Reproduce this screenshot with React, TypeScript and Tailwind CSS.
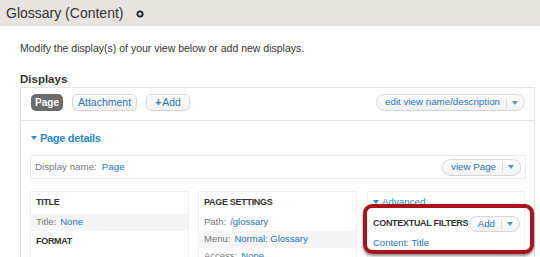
import React from "react";

const font = { fontFamily: '"Liberation Sans", Arial, sans-serif' };

function Caret({ color = "#5a8fc4" }: { color?: string }) {
  return (
    <svg width="6" height="4" viewBox="0 0 6 4" aria-hidden>
      <path d="M0 0h6L3 4z" fill={color} />
    </svg>
  );
}

function PillDrop({ label, className = "" }: { label: string; className?: string }) {
  return (
    <div
      className={`flex items-center rounded-full border border-[#d6d6d6] bg-gradient-to-b from-white to-[#f2f2f2] text-[9.75px] text-[#2673b8] ${className}`}
    >
      <span className="pl-[8px] pr-[6px]">{label}</span>
      <span className="flex h-[10px] items-center border-l border-[#dadada] pl-[5px] pr-[6px]">
        <Caret />
      </span>
    </div>
  );
}

function Tab({ label, active }: { label: React.ReactNode; active?: boolean }) {
  return active ? (
    <div className="flex h-[17px] w-[32px] items-center justify-center rounded-[5px] bg-[#6c6c6c] text-[10px] font-bold text-white">
      {label}
    </div>
  ) : (
    <div className="flex h-[17px] items-center rounded-[5px] border border-[#d8d8d8] bg-gradient-to-b from-white to-[#f0f0f0] px-[5px] text-[10.5px] text-[#2673b8]">
      {label}
    </div>
  );
}

function Row({ k, v, shade }: { k: string; v: string; shade?: boolean }) {
  return (
    <div className={`flex h-[17px] items-center px-[5px] text-[9.5px] ${shade ? "bg-[#f5f5f5]" : ""}`}>
      <span className="text-[#777]">{k}:</span>
      <span className="ml-[4px] text-[#2673b8]">{v}</span>
    </div>
  );
}

function Heading({ children }: { children: React.ReactNode }) {
  return (
    <div className="flex h-[22px] items-center whitespace-nowrap px-[5px] text-[9px] font-bold tracking-[-0.3px] text-[#333]">
      {children}
    </div>
  );
}

export default function App() {
  return (
    <div className="relative h-[257px] w-[540px] overflow-hidden bg-white" style={font}>
      <header className="flex h-[26px] items-center bg-[#e6e4df] pl-[6px]">
        <h1 className="text-[14px] text-[#333]">Glossary (Content)</h1>
        <svg className="ml-[13px] mt-[2px]" width="8" height="8" viewBox="0 0 8 8" aria-hidden>
          <circle cx="4" cy="4" r="2.6" fill="none" stroke="#222" strokeWidth="1.9" />
        </svg>
      </header>

      <main className="pl-[20px] pr-[5px]">
        <p className="mt-[15px] text-[10.5px] leading-[14px] text-[#333]">
          Modify the display(s) of your view below or add new displays.
        </p>
        <h2 className="mt-[16px] text-[11.5px] font-bold leading-[16px] text-[#333]">Displays</h2>

        <div className="border border-[#e2e2e2]">
          <div className="flex h-[33px] items-start border-b border-[#e2e2e2] pl-[10px] pr-[9px] pt-[6px]">
            <div className="flex gap-[9px]">
              <Tab label="Page" active />
              <Tab label="Attachment" />
              <Tab
                label={
                  <span className="px-[3px]">
                    <span className="mr-[1px] font-bold">+</span>Add
                  </span>
                }
              />
            </div>
            <PillDrop label="edit view name/description" className="ml-auto h-[17px]" />
          </div>

          <div className="pl-[9px] pr-[8px] pb-[10px]">
            <div className="flex h-[34px] items-center gap-[3px] pl-[1px] text-[11px] font-bold tracking-[-0.3px] text-[#2a88cf]">
              <Caret color="#2a88cf" />
              Page details
            </div>

            <div className="flex h-[24px] items-center border border-[#ececec] pl-[4px] pr-[4px] text-[9.75px]">
              <span className="text-[#777]">Display name:</span>
              <span className="ml-[5px] text-[#2673b8]">Page</span>
              <PillDrop label="view Page" className="ml-auto h-[17px]" />
            </div>

            <div className="mt-[12px] grid grid-cols-[159px_159px_159px] gap-x-[9px]">
              <div className="h-[80px] border border-[#efefef]">
                <Heading>TITLE</Heading>
                <Row k="Title" v="None" shade />
                <Heading>FORMAT</Heading>
              </div>
              <div className="h-[80px] border border-[#efefef]">
                <Heading>PAGE SETTINGS</Heading>
                <Row k="Path" v="/glossary" />
                <Row k="Menu" v="Normal: Glossary" shade />
                <Row k="Access" v="None" />
              </div>
              <div className="ml-[1px] h-[80px] border border-[#efefef]">
                <div className="flex h-[23px] items-start gap-[3px] px-[5px] pt-[4px] text-[9.75px] leading-[12px] text-[#2a88cf]">
                  <span className="mt-[4px]">
                    <Caret color="#2a88cf" />
                  </span>
                  Advanced
                </div>
                <div className="flex h-[18px] items-center pl-[5px] pr-[4px]">
                  <span className="whitespace-nowrap text-[9px] font-bold tracking-[-0.3px] text-[#333]">
                    CONTEXTUAL FILTERS
                  </span>
                  <PillDrop label="Add" className="ml-auto h-[16px]" />
                </div>
                <div className="mt-[3px] px-[5px] text-[9.5px] text-[#2673b8]">Content: Title</div>
              </div>
            </div>
          </div>
        </div>
      </main>

      <div className="pointer-events-none absolute left-[363px] top-[204px] h-[50px] w-[171px] rounded-[9px] border-[4px] border-[#a8141b] shadow-[0_2px_3px_rgba(0,0,0,0.45)]" />
    </div>
  );
}
